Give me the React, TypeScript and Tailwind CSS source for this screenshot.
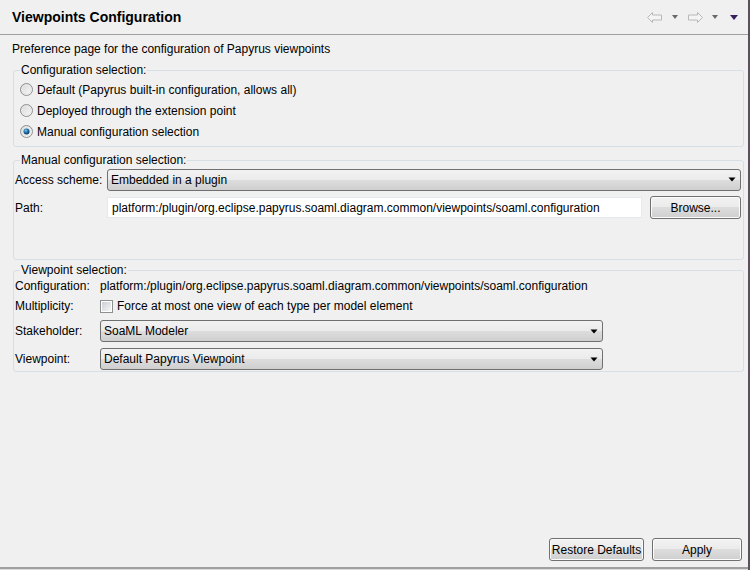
import React from "react";

/** Windows 7 style radio button. */
function Radio({ checked }: { checked?: boolean }) {
  return (
    <svg width="13" height="13" viewBox="0 0 13 13" className="shrink-0">
      <defs>
        <linearGradient id={checked ? "rg-on" : "rg-off"} x1="0" y1="0" x2="1" y2="1">
          <stop offset="0" stopColor="#d6d6d6" />
          <stop offset="1" stopColor="#fbfbfb" />
        </linearGradient>
        <radialGradient id="rdot" cx="0.4" cy="0.35" r="0.7">
          <stop offset="0" stopColor="#6fd0f4" />
          <stop offset="0.5" stopColor="#1d6fa8" />
          <stop offset="1" stopColor="#0b2f4f" />
        </radialGradient>
      </defs>
      <circle cx="6.5" cy="6.5" r="6" fill={checked ? "url(#rg-on)" : "url(#rg-off)"} stroke="#8e8f8f" />
      <circle cx="6.5" cy="6.5" r="4.4" fill="none" stroke="#e8e8e8" />
      {checked && <circle cx="6.5" cy="6.5" r="3" fill="url(#rdot)" />}
    </svg>
  );
}

function Checkbox() {
  return (
    <span className="flex h-[13px] w-[13px] shrink-0 items-center justify-center border border-[#8e8f8f] bg-white">
      <span className="h-[9px] w-[9px] bg-gradient-to-br from-[#cbcfd5] to-[#f6f6f6]" />
    </span>
  );
}

function ComboArrow() {
  return (
    <svg width="8" height="5" viewBox="0 0 8 5" className="shrink-0">
      <path d="M0.5 0.5h7L4 4.5z" fill="#000" />
    </svg>
  );
}

function Combo({ value, className }: { value: string; className?: string }) {
  return (
    <div
      className={
        "flex h-[22px] items-center rounded-[3px] border border-[#707070] bg-[linear-gradient(#f2f2f2_0%,#ebebeb_49%,#dddddd_50%,#cfcfcf_100%)] pl-[3px] pr-[4px] " +
        (className ?? "")
      }
    >
      <span className="flex-1 truncate">{value}</span>
      <ComboArrow />
    </div>
  );
}

function Button({ label, className }: { label: string; className?: string }) {
  return (
    <button
      type="button"
      className={
        "flex h-[23px] items-center justify-center rounded-[3px] border border-[#707070] bg-[linear-gradient(#f2f2f2_0%,#ebebeb_49%,#dddddd_50%,#cfcfcf_100%)] shadow-[inset_0_0_0_1px_#fcfcfc] " +
        (className ?? "")
      }
    >
      {label}
    </button>
  );
}

function NavArrow({ dir }: { dir: "back" | "fwd" }) {
  return (
    <svg width="15" height="11" viewBox="0 0 15 11" className="shrink-0">
      <polygon
        points="0.5,5.5 5.5,0.5 5.5,3 14.5,3 14.5,8 5.5,8 5.5,10.5"
        fill="#f4f4f4"
        stroke="#b8b8b8"
        transform={dir === "fwd" ? "translate(15,0) scale(-1,1)" : undefined}
      />
    </svg>
  );
}

function SmallDrop({ color, w }: { color: string; w: number }) {
  return (
    <svg width={w} height={w / 2 + 1} viewBox={`0 0 ${w} ${w / 2 + 1}`} className="shrink-0">
      <path d={`M0 0h${w}L${w / 2} ${w / 2 + 1}z`} fill={color} />
    </svg>
  );
}

export default function App() {
  return (
    <div className="flex h-[570px] w-[750px] flex-col border-r-2 border-r-[#5e4f5f] bg-[#f0f0f0] font-['Liberation_Sans',Arial,sans-serif] text-[12px] leading-[16px] text-black">
      {/* Title bar */}
      <div className="flex h-[35px] shrink-0 items-center border-b border-b-[#a0a0a0] pl-[12px] pr-[10px]">
        <span className="text-[14px] font-bold">Viewpoints Configuration</span>
        <div className="ml-auto flex items-center">
          <NavArrow dir="back" />
          <span className="ml-[10px]"><SmallDrop color="#6a6a6a" w={6} /></span>
          <span className="ml-[10px]"><NavArrow dir="fwd" /></span>
          <span className="ml-[9px]"><SmallDrop color="#6a6a6a" w={6} /></span>
          <span className="ml-[12px]"><SmallDrop color="#3a1f5d" w={8} /></span>
        </div>
      </div>

      {/* Body */}
      <div className="flex flex-1 flex-col pl-[12px] pt-[6px]">
        <p>Preference page for the configuration of Papyrus viewpoints</p>

        <fieldset className="ml-[1px] mt-[5px] w-[731px] rounded-[3px] border border-[#d5dfe5] pb-[4px]">
          <legend className="ml-[6px] px-[1px]">Configuration selection:</legend>
          <div className="flex flex-col pl-[6px] pt-[1px]">
            {[
              { label: "Default (Papyrus built-in configuration, allows all)", on: false },
              { label: "Deployed through the extension point", on: false },
              { label: "Manual configuration selection", on: true },
            ].map((r) => (
              <label key={r.label} className="flex h-[21px] items-center gap-[4px]">
                <Radio checked={r.on} />
                <span>{r.label}</span>
              </label>
            ))}
          </div>
        </fieldset>

        <fieldset className="ml-[1px] mt-[5px] w-[731px] rounded-[3px] border border-[#d5dfe5] pb-[40px]">
          <legend className="ml-[6px] px-[1px]">Manual configuration selection:</legend>
          <div className="flex flex-col pl-[1px] pr-[2px]">
            <div className="flex h-[23px] items-center">
              <span className="w-[92px] shrink-0">Access scheme:</span>
              <Combo value="Embedded in a plugin" className="flex-1" />
            </div>
            <div className="mt-[5px] flex h-[23px] items-center">
              <span className="w-[92px] shrink-0">Path:</span>
              <div className="flex h-[21px] w-[535px] items-center border border-[#e3e9ef] bg-white pl-[4px]">
                platform:/plugin/org.eclipse.papyrus.soaml.diagram.common/viewpoints/soaml.configuration
              </div>
              <Button label="Browse..." className="ml-auto w-[91px]" />
            </div>
          </div>
        </fieldset>

        <fieldset className="ml-[1px] mt-[2px] w-[731px] rounded-[3px] border border-[#d5dfe5] pb-[1px]">
          <legend className="ml-[6px] px-[1px]">Viewpoint selection:</legend>
          <div className="flex flex-col pl-[1px]">
            <div className="flex h-[16px] items-center">
              <span className="w-[85px] shrink-0">Configuration:</span>
              <span>platform:/plugin/org.eclipse.papyrus.soaml.diagram.common/viewpoints/soaml.configuration</span>
            </div>
            <div className="mt-[3px] flex h-[18px] items-center">
              <span className="w-[85px] shrink-0">Multiplicity:</span>
              <Checkbox />
              <span className="ml-[4px]">Force at most one view of each type per model element</span>
            </div>
            <div className="mt-[5px] flex h-[22px] items-center">
              <span className="w-[85px] shrink-0">Stakeholder:</span>
              <Combo value="SoaML Modeler" className="w-[503px]" />
            </div>
            <div className="mt-[6px] flex h-[22px] items-center">
              <span className="w-[85px] shrink-0">Viewpoint:</span>
              <Combo value="Default Papyrus Viewpoint" className="w-[503px]" />
            </div>
          </div>
        </fieldset>

        <div className="mt-auto flex justify-end gap-[8px] pb-[6px] pr-[6px]">
          <Button label="Restore Defaults" className="w-[95px]" />
          <Button label="Apply" className="w-[90px]" />
        </div>
      </div>
      <div className="h-[2px] shrink-0 bg-[#a0a0a0]" />
      <div className="h-[1px] shrink-0 bg-[#dcdcdc]" />
    </div>
  );
}
